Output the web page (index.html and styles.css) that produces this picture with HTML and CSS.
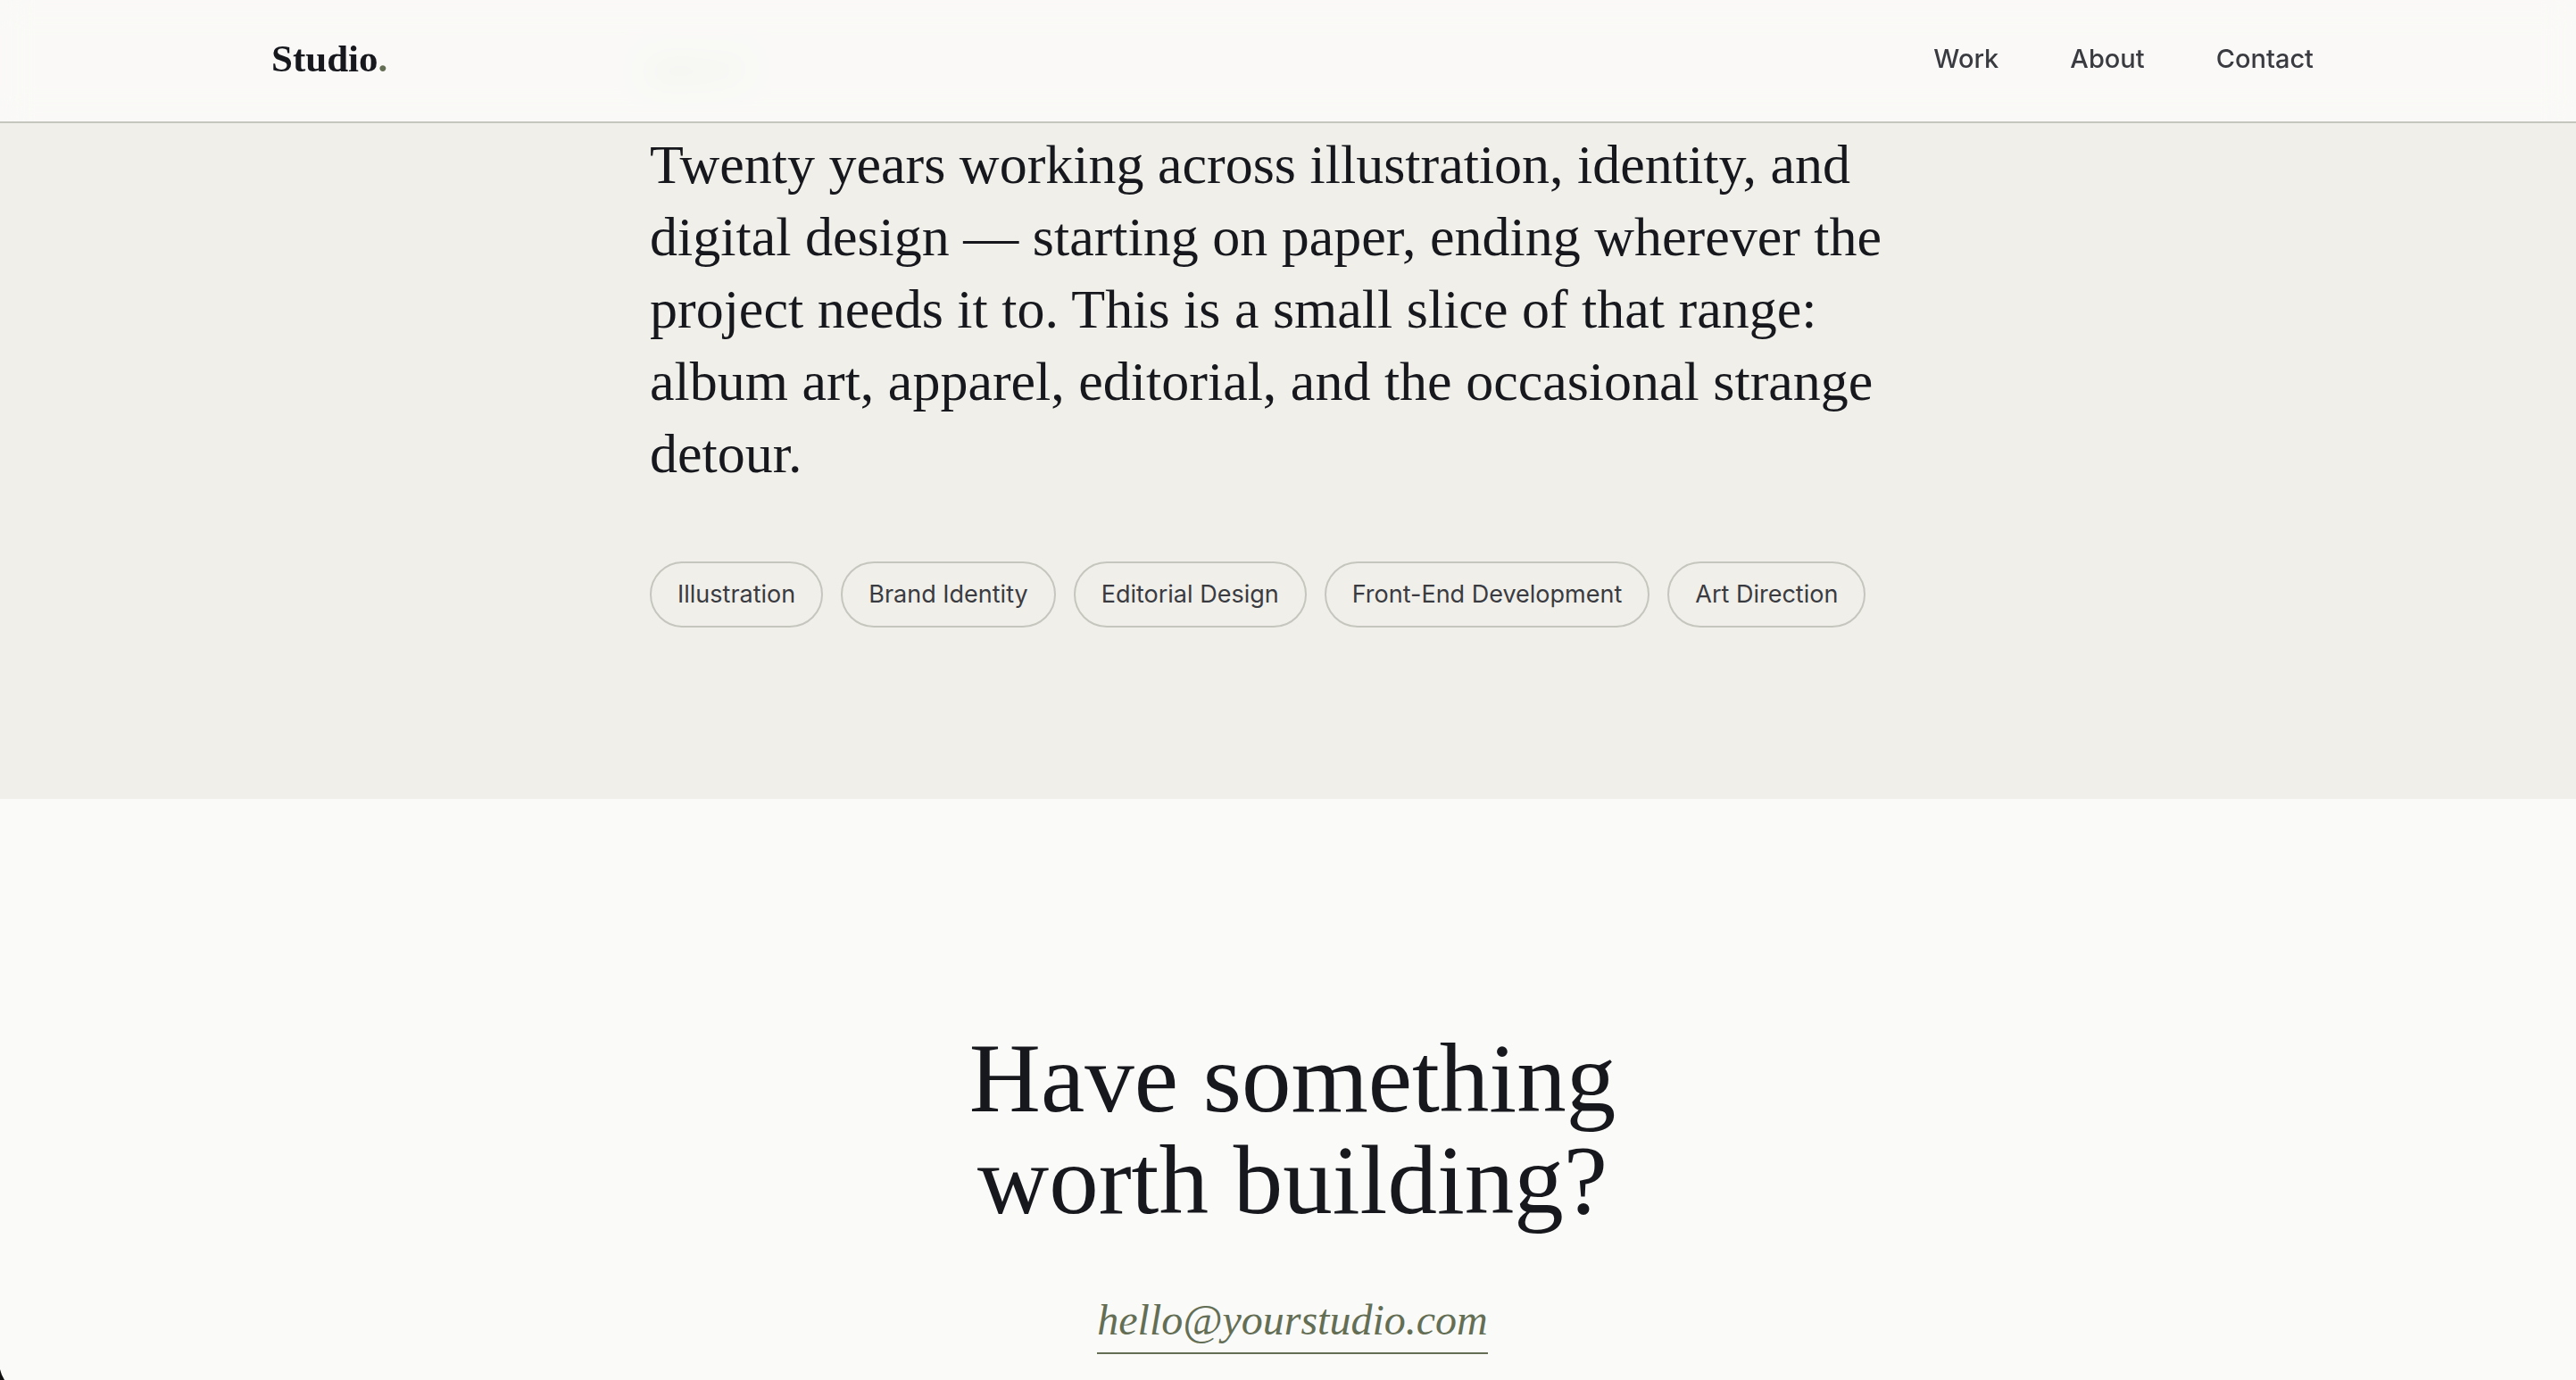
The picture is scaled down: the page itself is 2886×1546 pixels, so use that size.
FILE: index.html
```html
<!DOCTYPE html>
<html lang="en">
<head>
	<meta charset="utf-8">
	<meta name="viewport" content="width=device-width, initial-scale=1">
	<title>Studio.</title>
	<link rel="stylesheet" href="styles.css">
</head>
<body>
	<header class="site-header">
		<div class="header-inner">
			<a class="logo" href="#">Studio<span class="dot">.</span></a>
			<nav class="nav">
				<a href="#work">Work</a>
				<a href="#about">About</a>
				<a href="#contact">Contact</a>
			</nav>
		</div>
	</header>

	<section class="about" id="about">
		<div class="about-inner">
			<p class="label">About</p>
			<p class="intro">Twenty years working across illustration, identity, and digital design — starting on paper, ending wherever the project needs it to. This is a small slice of that range: album art, apparel, editorial, and the occasional strange detour.</p>
			<ul class="tags">
				<li>Illustration</li>
				<li>Brand Identity</li>
				<li>Editorial Design</li>
				<li>Front-End Development</li>
				<li>Art Direction</li>
			</ul>
		</div>
	</section>

	<section class="contact" id="contact">
		<h2>Have something<br>worth building?</h2>
		<a class="email" href="mailto:hello@yourstudio.com">hello@yourstudio.com</a>
	</section>

	<!-- dark window corner -->
	<svg class="corner" width="6" height="14" viewBox="0 0 6 14" aria-hidden="true">
		<path d="M0 2 Q1.5 8.5 5 14 H0 Z" fill="#111"/>
	</svg>
</body>
</html>
```
FILE: styles.css
```css
:root {
	--bg: #fafaf8;
	--bg-alt: #f0efea;
	--ink: #16181d;
	--ink-soft: #3a3b41;
	--green: #636e54;
	--line: #c5c6bd;
	--serif: "Liberation Serif", "Times New Roman", serif;
	--sans: Inter, "Liberation Sans", sans-serif;
}

* {
	box-sizing: border-box;
	margin: 0;
	padding: 0;
}

body {
	background: var(--bg);
	color: var(--ink);
	font-family: var(--sans);
}

a {
	color: inherit;
	text-decoration: none;
}

/* Header */
.site-header {
	position: fixed;
	top: 0;
	left: 0;
	right: 0;
	z-index: 10;
	padding-left: 10px;
	background: rgba(250, 250, 248, 0.88);
	backdrop-filter: blur(16px);
	border-bottom: 2px solid var(--line);
}

.header-inner {
	display: flex;
	justify-content: space-between;
	align-items: center;
	max-width: 2480px;
	margin: 0 auto;
	padding: 40px 96px 44px;
}

.logo {
	font-family: var(--serif);
	font-size: 43px;
	font-weight: 700;
	line-height: 52px;
}

.dot {
	color: var(--green);
}

.nav {
	display: flex;
	gap: 80px;
	color: var(--ink-soft);
	font-size: 29px;
	font-weight: 500;
	line-height: 52px;
}

/* About */
.about {
	padding: 64px 0 192px 10px;
	background: var(--bg-alt);
}

.about-inner {
	max-width: 1440px;
	margin: 0 auto;
}

.label {
	margin-bottom: 48px;
	color: var(--green);
	font-size: 26px;
	font-weight: 600;
	line-height: 32px;
	letter-spacing: 3px;
	text-transform: uppercase;
}

.intro {
	font-family: var(--serif);
	font-size: 62px;
	line-height: 81px;
}

.tags {
	display: flex;
	flex-wrap: wrap;
	gap: 20px;
	margin-top: 80px;
	list-style: none;
}

.tags li {
	padding: 15px 29px;
	border: 2px solid var(--line);
	border-radius: 40px;
	color: var(--ink-soft);
	font-size: 27px;
	line-height: 40px;
}

/* Contact */
.contact {
	display: flex;
	flex-direction: column;
	align-items: center;
	padding: 256px 0 28px 10px;
	text-align: center;
}

.contact h2 {
	font-family: var(--serif);
	font-size: 111px;
	font-weight: 400;
	line-height: 114px;
}

.email {
	margin-top: 72px;
	padding-bottom: 8px;
	border-bottom: 2px solid var(--green);
	color: var(--green);
	font-family: var(--serif);
	font-size: 48px;
	font-style: italic;
	line-height: 56px;
}

.corner {
	position: fixed;
	left: 0;
	bottom: 0;
}
```
